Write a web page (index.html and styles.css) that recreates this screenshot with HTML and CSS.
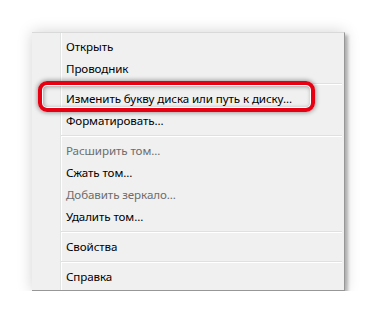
FILE: index.html
```html
<!DOCTYPE html>
<html>
<head>
	<meta http-equiv="content-type" content="text/html; charset=utf-8" />
	<title>Управление дисками</title>
	<link rel="stylesheet" href="styles.css">
</head>
<body>
	<div class="menu">
		<div class="item">Открыть</div>
		<div class="item">Проводник</div>
		<div class="sep"></div>
		<div class="item">Изменить букву диска или путь к диску...</div>
		<div class="item">Форматировать...</div>
		<div class="sep"></div>
		<div class="item disabled">Расширить том...</div>
		<div class="item">Сжать том...</div>
		<div class="item disabled">Добавить зеркало...</div>
		<div class="item">Удалить том...</div>
		<div class="sep"></div>
		<div class="item">Свойства</div>
		<div class="sep"></div>
		<div class="item">Справка</div>

		<!-- red annotation around the highlighted entry -->
		<div class="mark"></div>
		<div class="taskbar"></div>
	</div>
</body>
</html>
```

FILE: styles.css
```css
body {
	margin: 0;
	padding: 32px 0 0 32px;
	background-color: #fff;
	font-family: "Noto Sans", "Open Sans", sans-serif;
	font-size: 11.6px;
	letter-spacing: -0.1px;
}

/* Context menu */
.menu {
	position: relative;
	width: 312px;
	padding: 3px 0 2px 0;
	background-color: #f0f0f0;
	background-image: linear-gradient(to right, transparent 28px, #e2e3e3 28px, #e2e3e3 29px, #fff 29px, #fff 30px, transparent 30px);
	border-top: 1px solid #d9d9d9;
	border-right: 1px solid #979797;
	border-bottom: 1px solid #979797;
	box-shadow: 3px 3px 3px rgba(0, 0, 0, 0.25), 0 0 14px rgba(0, 0, 0, 0.18);
}

.item {
	height: 22px;
	line-height: 21px;
	padding-left: 34px;
	color: #000;
	white-space: nowrap;
}

.item.disabled {
	color: #6d6d6d;
}

.sep {
	height: 8px;
	margin-left: 29px;
	margin-right: 2px;
	background: linear-gradient(to bottom, transparent 3px, #e0e0e0 3px, #e0e0e0 4px, #fff 4px, #fff 5px, transparent 5px);
}

.mark {
	position: absolute;
	left: 6px;
	top: 48px;
	width: 269px;
	height: 23px;
	border: 4px solid #e60012;
	border-radius: 9px;
	box-shadow: 0 0 4px 1px rgba(0, 0, 0, 0.35), inset 0 0 0 1px #fff, inset 1px 1px 4px 1px rgba(0, 0, 0, 0.35);
}

.taskbar {
	position: absolute;
	right: -1px;
	bottom: -3px;
	width: 37px;
	height: 2px;
	background-color: #3a5a80;
}
```
